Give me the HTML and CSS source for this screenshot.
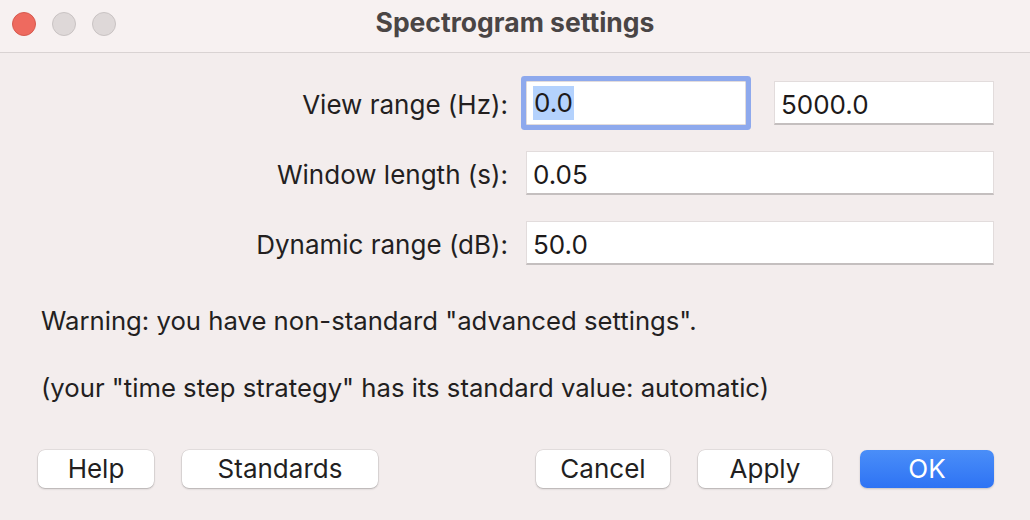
FILE: index.html
```html
<!DOCTYPE html>
<html>
<head>
<meta charset="utf-8">
<link rel="stylesheet" href="styles.css">
</head>
<body>
<div class="window">
  <div class="titlebar">
    <div class="lights">
      <span class="light red"></span>
      <span class="light grey"></span>
      <span class="light grey"></span>
    </div>
    <div class="title">Spectrogram settings</div>
  </div>
  <div class="content">
    <div class="form">
      <div class="row">
        <div class="label">View range (Hz):</div>
        <div class="fields">
          <div class="field half focused"><span class="sel">0.0</span></div>
          <div class="field half">5000.0</div>
        </div>
      </div>
      <div class="row">
        <div class="label">Window length (s):</div>
        <div class="fields">
          <div class="field full">0.05</div>
        </div>
      </div>
      <div class="row">
        <div class="label">Dynamic range (dB):</div>
        <div class="fields">
          <div class="field full">50.0</div>
        </div>
      </div>
    </div>
    <div class="notes">
      <p class="note">Warning: you have non-standard "advanced settings".</p>
      <p class="note">(your "time step strategy" has its standard value: automatic)</p>
    </div>
    <div class="buttons">
      <div class="group">
        <button class="btn help">Help</button>
        <button class="btn standards">Standards</button>
      </div>
      <div class="group">
        <button class="btn">Cancel</button>
        <button class="btn">Apply</button>
        <button class="btn primary">OK</button>
      </div>
    </div>
  </div>
</div>
</body>
</html>
```
FILE: styles.css
```css
* { box-sizing: border-box; }
html, body {
  margin: 0;
  padding: 0;
  width: 1030px;
  height: 520px;
  overflow: hidden;
  background: #f3eded;
  font-family: Inter, "Open Sans", "Liberation Sans", sans-serif;
  color: #231f1f;
}
.window {
  width: 1030px;
  height: 520px;
  display: flex;
  flex-direction: column;
}
.titlebar {
  height: 53px;
  flex: 0 0 53px;
  background: #f7f1f1;
  border-bottom: 1px solid #d9d3d3;
  position: relative;
  display: flex;
  align-items: center;
  justify-content: center;
}
.lights {
  position: absolute;
  left: 12px;
  top: 12px;
  display: flex;
  gap: 16px;
}
.light {
  width: 24px;
  height: 24px;
  border-radius: 50%;
  display: block;
}
.light.red {
  background: #ee6a5f;
  border: 1px solid #d65a4f;
}
.light.grey {
  background: #ded8d8;
  border: 1px solid #c9c3c3;
}
.title {
  font-weight: 700;
  font-size: 26.5px;
  color: #4a4545;
  margin-top: -8px;
}
.content {
  flex: 1;
  display: flex;
  flex-direction: column;
}
.form {
  padding-top: 28px;
  display: flex;
  flex-direction: column;
  gap: 26px;
}
.row {
  display: flex;
  align-items: center;
  height: 44px;
}
.label {
  width: 508px;
  text-align: right;
  font-size: 26px;
  margin-right: 18px;
  padding-top: 2px;
}
.fields {
  display: flex;
  gap: 28px;
  width: 468px;
}
.field {
  height: 44px;
  background: #ffffff;
  border: 1px solid #e2dcdc;
  border-bottom: 2px solid #c4bfbf;
  font-size: 26px;
  line-height: 40px;
  padding-top: 3px;
  padding-left: 6px;
  color: #1d1a1a;
}
.field.half { width: 220px; }
.field.full { width: 468px; }
.field.focused {
  border: 1px solid #e2dcdc;
  box-shadow: 0 0 0 5px #8ea9ed;
  border-radius: 1px;
  padding-top: 1px;
}
.sel {
  background: #b4d2fd;
  display: inline-block;
  line-height: 34px;
  padding: 0 1px;
}
.notes {
  padding-left: 41px;
  padding-top: 40px;
  display: flex;
  flex-direction: column;
  gap: 35px;
}
.note {
  margin: 0;
  font-size: 25.7px;
  line-height: 32px;
}
.buttons {
  margin-top: 46px;
  display: flex;
  justify-content: space-between;
  padding-left: 38px;
  padding-right: 36px;
}
.group {
  display: flex;
  gap: 28px;
}
.btn {
  height: 38px;
  width: 134px;
  border: none;
  border-radius: 7px;
  background: #ffffff;
  box-shadow: 0 0 0 0.5px rgba(0,0,0,0.12), 0 1px 2px rgba(0,0,0,0.22);
  font-family: Inter, "Open Sans", "Liberation Sans", sans-serif;
  font-size: 26px;
  color: #231f1f;
  padding: 0 0 2px 0;
}
.btn.help { width: 116px; }
.btn.standards { width: 196px; }
.btn.primary {
  background: linear-gradient(#4a8ef8, #2e73f4);
  color: #ffffff;
  box-shadow: 0 1px 2px rgba(0,0,0,0.18);
}
```
